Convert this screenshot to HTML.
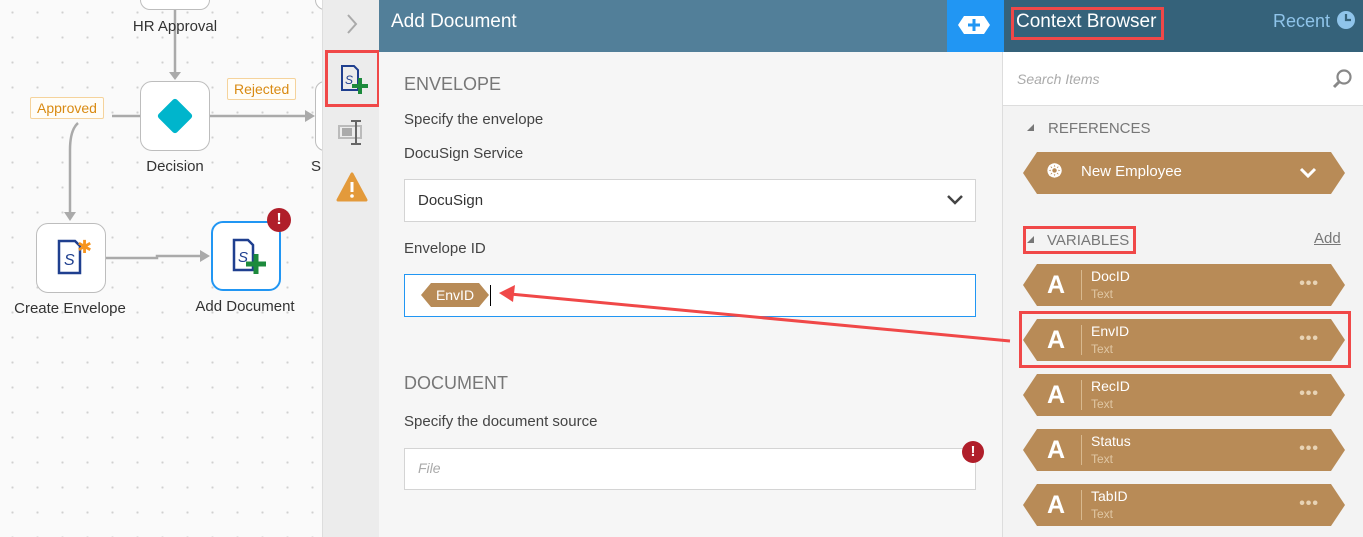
<!DOCTYPE html>
<html><head><meta charset="utf-8"><style>
*{box-sizing:border-box;margin:0;padding:0}
body{width:1363px;height:537px;overflow:hidden;position:relative;font-family:"Liberation Sans",sans-serif;background:#f9f9f9}
.a{position:absolute}
.canvas{left:0;top:0;width:322px;height:537px;background-color:#fafafa;background-image:radial-gradient(#d0d0d0 1px,transparent 1.2px);background-size:25px 25px}
.node{position:absolute;width:70px;height:70px;background:#fff;border:1.5px solid #bdbdbd;border-radius:12px}
.lbl{position:absolute;font-size:15px;color:#333;text-align:center;width:140px}
.tag{position:absolute;border:1px solid #f5d39c;background:#fffdf8;color:#d98a12;font-size:14px;padding:2px 6px;border-radius:2px}
.hex{position:absolute;left:1023px;width:322px;height:42px;background:#b88b57;clip-path:polygon(14px 0,308px 0,100% 50%,308px 100%,14px 100%,0 50%)}
.hex .A{position:absolute;left:24px;top:7px;color:#fff;font-weight:bold;font-size:25px}
.hex .sep{position:absolute;left:58px;top:6px;width:1px;height:30px;background:#d8b98f}
.hex .n{position:absolute;left:68px;top:4px;color:#fff;font-size:14px}
.hex .t{position:absolute;left:68px;top:23px;color:#e0c7a4;font-size:12px}
.hex .d{position:absolute;right:26px;top:11px;color:#e8d3b5;font-size:16px;letter-spacing:1px;font-weight:bold}
.lab{position:absolute;left:404px;font-size:15px;color:#444}
.sec{position:absolute;left:404px;font-size:18px;color:#777}
.box{position:absolute;left:404px;width:572px;background:#fff;border:1px solid #d4d4d4}
.rb{position:absolute;border:3px solid #f04848}
</style></head><body>
<div class="a canvas"></div>
<svg class="a" style="left:0;top:0" width="322" height="537">
<g stroke="#aaa" stroke-width="2.5" fill="none">
<line x1="175" y1="10" x2="175" y2="72"/>
<line x1="112" y1="116" x2="140" y2="116"/>
<line x1="210" y1="116" x2="305" y2="116"/>
<path d="M78 123 Q70 130 70 150 L70 212"/>
<path d="M105 258 L157 258 L157 256 L203 256"/>
</g>
<g fill="#aaa"><path d="M169 72 L181 72 L175 80Z"/><path d="M64 212 L76 212 L70 221Z"/><path d="M305 110 L305 122 L315 116Z"/><path d="M200 250 L200 262 L210 256Z"/></g>
</svg>
<div class="node" style="left:140px;top:-12px;height:22px;border-top:none;border-radius:0 0 10px 10px"></div>
<div class="node" style="left:315px;top:-12px;width:20px;height:22px"></div>
<div class="lbl" style="left:105px;top:18px">HR Approval</div>
<div class="node" style="left:140px;top:81px"></div>
<div class="a" style="left:162px;top:103px;width:26px;height:26px;background:#00b5cc;transform:rotate(45deg);border-radius:3px"></div>
<div class="lbl" style="left:105px;top:158px">Decision</div>
<div class="node" style="left:315px;top:81px;width:20px"></div>
<div class="a" style="left:311px;top:158px;font-size:15px;color:#333">S</div>
<div class="tag" style="left:30px;top:97px">Approved</div>
<div class="tag" style="left:227px;top:78px">Rejected</div>
<div class="node" style="left:36px;top:223px"></div>
<svg class="a" style="left:55px;top:237px" width="36" height="40"><path d="M4 4 L20 4 L25 9 L25 36 L4 36Z" fill="none" stroke="#1f3f8f" stroke-width="2.5"/><text x="9" y="28" font-size="16" font-style="italic" fill="#1f3f8f" font-family="Liberation Sans">S</text><text x="22" y="16" font-size="18" fill="#f7941d" font-family="Liberation Sans">✱</text></svg>
<div class="lbl" style="left:0;top:300px">Create Envelope</div>
<div class="node" style="left:211px;top:221px;border:2px solid #2196f3"></div>
<svg class="a" style="left:230px;top:236px" width="40" height="42"><path d="M4 4 L18 4 L23 9 L23 34 L4 34Z" fill="none" stroke="#1f3f8f" stroke-width="2.5"/><text x="8" y="26" font-size="15" font-style="italic" fill="#1f3f8f" font-family="Liberation Sans">S</text><path d="M26 18 V38 M16 28 H36" stroke="#1c8a3c" stroke-width="5"/></svg>
<div class="a" style="left:267px;top:208px;width:24px;height:24px;border-radius:50%;background:#b01e2a;color:#fff;font-weight:bold;text-align:center;font-size:16px;line-height:24px">!</div>
<div class="lbl" style="left:175px;top:298px">Add Document</div>
<div class="a" style="left:322px;top:0;width:57px;height:537px;background:#ececec;border-left:1px solid #ddd"></div>
<svg class="a" style="left:344px;top:12px" width="16" height="24"><path d="M4 3 L12 12 L4 21" fill="none" stroke="#aaa" stroke-width="2"/></svg>
<div class="rb" style="left:325px;top:50px;width:55px;height:57px"></div>
<svg class="a" style="left:336px;top:62px" width="36" height="36"><path d="M6 4 L18 4 L22 8 L22 28 L6 28Z" fill="none" stroke="#1f3f8f" stroke-width="2"/><text x="9" y="22" font-size="12" font-style="italic" fill="#1f3f8f">S</text><path d="M24 16 V32 M16 24 H32" stroke="#1c8a3c" stroke-width="4"/></svg>
<svg class="a" style="left:336px;top:118px" width="32" height="30"><rect x="3" y="8" width="22" height="12" fill="none" stroke="#bbb" stroke-width="2"/><rect x="6" y="10" width="10" height="8" fill="#aaa"/><path d="M20 3 V26 M15 3 H25 M15 26 H25" stroke="#666" stroke-width="2"/></svg>
<svg class="a" style="left:336px;top:172px" width="32" height="32"><path d="M16 2 L30 28 L2 28Z" fill="#e39a3b" stroke="#e39a3b" stroke-linejoin="round" stroke-width="3"/><rect x="14.5" y="10" width="3" height="10" fill="#fff"/><circle cx="16" cy="24" r="1.8" fill="#fff"/></svg>
<div class="a" style="left:379px;top:0;width:623px;height:537px;background:#f6f6f6"></div>
<div class="a" style="left:379px;top:0;width:568px;height:52px;background:#527f99"></div>
<div class="a" style="left:391px;top:11px;font-size:19px;color:#fff">Add Document</div>
<div class="a" style="left:947px;top:0;width:55px;height:52px;background:#2196f3"></div>
<svg class="a" style="left:958px;top:14px" width="34" height="22"><path d="M6 2 H26 L32 11 L26 20 H6 L0 11Z" fill="#fff"/><path d="M16 5 V17 M10 11 H22" stroke="#2196f3" stroke-width="3"/></svg>
<div class="sec" style="top:74px">ENVELOPE</div>
<div class="lab" style="top:111px">Specify the envelope</div>
<div class="lab" style="top:145px">DocuSign Service</div>
<div class="box" style="top:179px;height:43px"></div>
<div class="a" style="left:418px;top:192px;font-size:15px;color:#333">DocuSign</div>
<svg class="a" style="left:946px;top:193px" width="18" height="14"><path d="M2 3 L9 10 L16 3" fill="none" stroke="#444" stroke-width="2.5"/></svg>
<div class="lab" style="top:240px">Envelope ID</div>
<div class="box" style="top:274px;height:43px;border-color:#2196f3"></div>
<div class="a" style="left:421px;top:283px;width:68px;height:24px;background:#b88b57;clip-path:polygon(10px 0,58px 0,100% 50%,58px 100%,10px 100%,0 50%);color:#fff;font-size:14px;line-height:24px;text-align:center">EnvID</div>
<div class="a" style="left:490px;top:285px;width:1px;height:21px;background:#000"></div>
<div class="sec" style="top:373px">DOCUMENT</div>
<div class="lab" style="top:413px">Specify the document source</div>
<div class="box" style="top:448px;height:42px"></div>
<div class="a" style="left:418px;top:460px;font-size:14px;color:#aaa;font-style:italic">File</div>
<div class="a" style="left:962px;top:441px;width:22px;height:22px;border-radius:50%;background:#b01e2a;color:#fff;font-weight:bold;text-align:center;font-size:15px;line-height:22px">!</div>
<div class="a" style="left:1002px;top:0;width:361px;height:537px;background:#f3f3f3;border-left:1px solid #ddd"></div>
<div class="a" style="left:1002px;top:0;width:2px;height:52px;background:#2196f3"></div>
<div class="a" style="left:1004px;top:0;width:359px;height:52px;background:#35627a"></div>
<div class="rb" style="left:1011px;top:7px;width:153px;height:33px"></div>
<div class="a" style="left:1016px;top:11px;font-size:19px;color:#fff">Context Browser</div>
<div class="a" style="left:1273px;top:11px;font-size:18px;color:#8fc4ea">Recent</div>
<svg class="a" style="left:1336px;top:10px" width="20" height="20"><circle cx="10" cy="10" r="9" fill="#8fc4ea"/><path d="M10 4 V10 H15" fill="none" stroke="#35627a" stroke-width="2.2"/></svg>
<div class="a" style="left:1003px;top:52px;width:360px;height:54px;background:#fff;border-bottom:1px solid #ddd"></div>
<div class="a" style="left:1017px;top:71px;font-size:14px;color:#aaa;font-style:italic">Search Items</div>
<svg class="a" style="left:1332px;top:68px" width="22" height="22"><circle cx="12" cy="9" r="6.5" fill="none" stroke="#888" stroke-width="2.2"/><path d="M7.5 13.5 L2 19" stroke="#888" stroke-width="3"/></svg>
<div class="a" style="left:1027px;top:124px;width:0;height:0;border-left:7px solid transparent;border-bottom:7px solid #777"></div>
<div class="a" style="left:1048px;top:120px;font-size:15px;color:#777">REFERENCES</div>
<div class="hex" style="top:152px"><div class="a" style="left:24px;top:9px;color:#fff;font-size:18px;font-weight:bold">❂</div><div class="n" style="left:58px;top:11px;font-size:15px">New Employee</div><svg class="a" style="left:276px;top:14px" width="18" height="14"><path d="M2 3 L9 10 L16 3" fill="none" stroke="#fff" stroke-width="3"/></svg></div>
<div class="rb" style="left:1023px;top:226px;width:113px;height:28px"></div>
<div class="a" style="left:1027px;top:236px;width:0;height:0;border-left:7px solid transparent;border-bottom:7px solid #777"></div>
<div class="a" style="left:1047px;top:232px;font-size:15px;color:#777">VARIABLES</div>
<div class="a" style="left:1314px;top:230px;font-size:15px;color:#777;text-decoration:underline">Add</div>
<div class="hex" style="top:264px"><div class="A">A</div><div class="sep"></div><div class="n">DocID</div><div class="t">Text</div><div class="d">•••</div></div>
<div class="hex" style="top:319px"><div class="A">A</div><div class="sep"></div><div class="n">EnvID</div><div class="t">Text</div><div class="d">•••</div></div>
<div class="rb" style="left:1019px;top:311px;width:332px;height:57px"></div>
<div class="hex" style="top:374px"><div class="A">A</div><div class="sep"></div><div class="n">RecID</div><div class="t">Text</div><div class="d">•••</div></div>
<div class="hex" style="top:429px"><div class="A">A</div><div class="sep"></div><div class="n">Status</div><div class="t">Text</div><div class="d">•••</div></div>
<div class="hex" style="top:484px"><div class="A">A</div><div class="sep"></div><div class="n">TabID</div><div class="t">Text</div><div class="d">•••</div></div>
<svg class="a" style="left:0;top:0" width="1363" height="537"><line x1="1010" y1="341" x2="510" y2="294" stroke="#f04848" stroke-width="3"/><path d="M499 293 L515 285 L513 302Z" fill="#f04848"/></svg>
</body></html>
